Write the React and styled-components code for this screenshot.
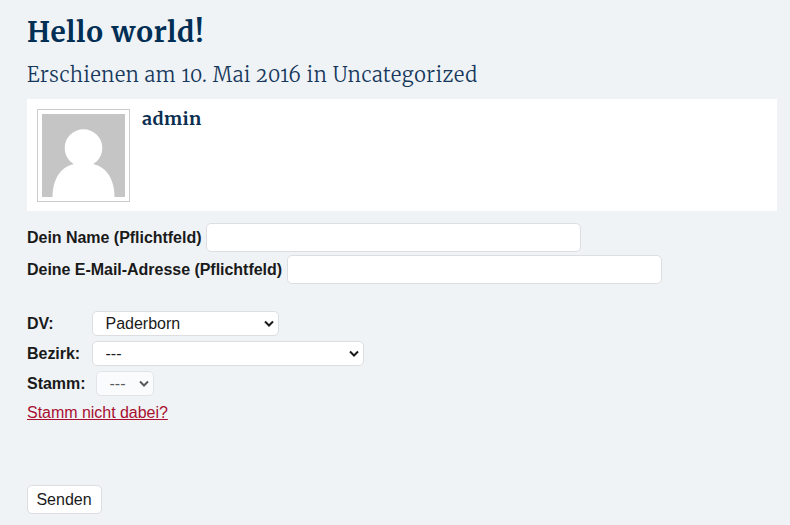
import React from "react";
import styled, { createGlobalStyle } from "styled-components";

const GlobalStyle = createGlobalStyle`
  * { box-sizing: border-box; }
  body {
    margin: 0;
    background: #eff3f6;
    color: #1a1a1a;
    font: 16px/20px "Liberation Sans", Arial, sans-serif;
    overflow: hidden;
  }
`;

const serif = `"Merriweather", "DejaVu Serif Condensed", "DejaVu Serif", serif`;

const Page = styled.main`
  width: 790px;
  height: 525px;
  padding: 12px 13px 0 27px;
`;

const Title = styled.h1`
  margin: 0;
  font: bold 28px/40px ${serif};
  letter-spacing: 0.88px;
  color: #002e54;
  white-space: nowrap;
`;

const Meta = styled.h2`
  margin: 5px 0 0;
  font: 300 20px/36px ${serif};
  font-variant-numeric: oldstyle-nums;
  letter-spacing: 0.64px;
  color: #16385c;
  white-space: nowrap;
`;

const AuthorCard = styled.section`
  display: flex;
  gap: 12px;
  width: 750px;
  height: 112px;
  margin-top: 6px;
  padding: 10px;
  background: #fff;
`;

const AvatarFrame = styled.div`
  width: 93px;
  height: 93px;
  padding: 4px;
  border: 1px solid #ccc;
  flex: none;
  svg { display: block; }
`;

const AuthorName = styled.h3`
  margin: -3px 0 0;
  font: bold 18px/26px ${serif};
  letter-spacing: 0.4px;
  color: #0b2f50;
`;

const Form = styled.form`
  display: flex;
  flex-direction: column;
  align-items: flex-start;
  padding-top: 12px;
`;

const Field = styled.label`
  display: flex;
  align-items: center;
  height: 29px;
  margin-bottom: 3px;
  font-weight: bold;
  white-space: nowrap;
`;

const FieldLabel = styled.span`
  width: ${(p) => p.$width}px;
  letter-spacing: -0.03px;
`;

const controlBox = `
  background: #fff;
  border: 1px solid #dcdee2;
  border-radius: 5px;
  color: #1a1a1a;
  font: 16px "Liberation Sans", Arial, sans-serif;
`;

const TextInput = styled.input`
  ${controlBox}
  width: 375px;
  height: 29px;
  padding: 0 8px;
`;

const Choices = styled.div`
  display: grid;
  gap: 5px;
  margin-top: 24px;
`;

const Choice = styled.label`
  display: flex;
  align-items: center;
  height: 25px;
  font-weight: bold;
`;

const SelectWrap = styled.span`
  display: grid;
  width: ${(p) => p.$width}px;
  height: 25px;
  opacity: ${(p) => (p.$dim ? 0.7 : 1)};
  > * { grid-area: 1 / 1; }
  svg {
    align-self: center;
    justify-self: end;
    margin-right: 4px;
    pointer-events: none;
  }
`;

const Select = styled.select`
  ${controlBox}
  appearance: none;
  width: 100%;
  height: 25px;
  padding: 0 12.5px;
  opacity: 1;
`;

const MissingLink = styled.a`
  margin-top: 7px;
  color: #a80f30;
  text-decoration: underline;
  letter-spacing: -0.03px;
`;

const SendButton = styled.button`
  ${controlBox}
  width: 75px;
  height: 29px;
  margin-top: 62px;
  padding: 0 1px 0 0;
`;

function Avatar() {
  return (
    <AvatarFrame>
      <svg width="83" height="83" viewBox="0 0 83 83" role="img" aria-label="admin">
        <rect width="83" height="83" fill="#c5c5c5" />
        <circle cx="41.5" cy="34" r="18.8" fill="#fff" />
        <path d="M10.5 83C10.5 66 18 53 32 50H51C65 53 72.5 66 72.5 83Z" fill="#fff" />
      </svg>
    </AvatarFrame>
  );
}

function Dropdown({ label, labelWidth, width, value, disabled }) {
  return (
    <Choice>
      <FieldLabel $width={labelWidth}>{label}</FieldLabel>
      <SelectWrap $width={width} $dim={disabled}>
        <Select disabled={disabled} defaultValue={value}>
          <option>{value}</option>
        </Select>
        <svg width="12" height="8" viewBox="0 0 12 8" fill="none" stroke="#1a1a1a" strokeWidth="2">
          <path d="M2 1.5L6 5.5L10 1.5" />
        </svg>
      </SelectWrap>
    </Choice>
  );
}

export default function App() {
  return (
    <>
      <GlobalStyle />
      <Page>
        <Title>Hello world!</Title>
        <Meta>Erschienen am 10. Mai 2016 in Uncategorized</Meta>
        <AuthorCard>
          <Avatar />
          <AuthorName>admin</AuthorName>
        </AuthorCard>
        <Form onSubmit={(e) => e.preventDefault()}>
          <Field>
            <FieldLabel $width={179}>Dein Name (Pflichtfeld)</FieldLabel>
            <TextInput type="text" />
          </Field>
          <Field>
            <FieldLabel $width={260}>Deine E-Mail-Adresse (Pflichtfeld)</FieldLabel>
            <TextInput type="email" />
          </Field>
          <Choices>
            <Dropdown label="DV:" labelWidth={65} width={187} value="Paderborn" />
            <Dropdown label="Bezirk:" labelWidth={65} width={272} value="---" />
            <Dropdown label="Stamm:" labelWidth={69} width={58} value="---" disabled />
          </Choices>
          <MissingLink href="#">Stamm nicht dabei?</MissingLink>
          <SendButton type="submit">Senden</SendButton>
        </Form>
      </Page>
    </>
  );
}
